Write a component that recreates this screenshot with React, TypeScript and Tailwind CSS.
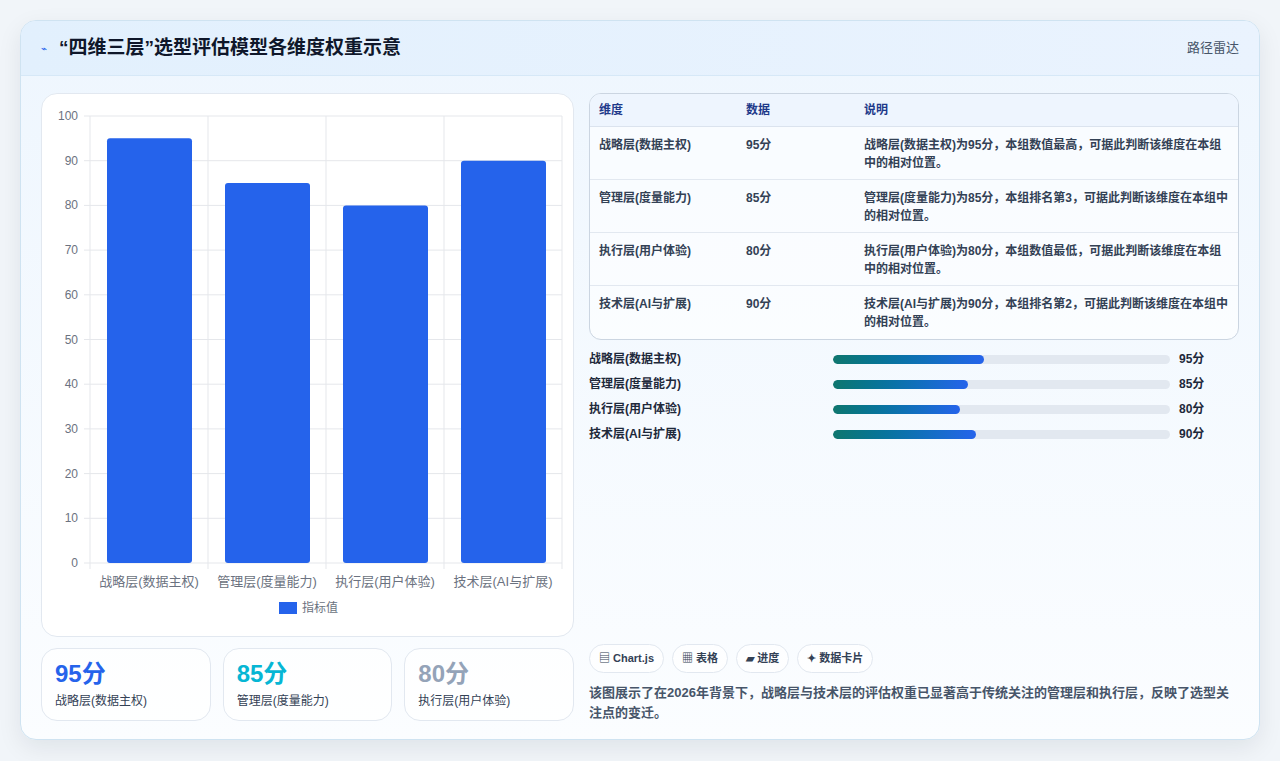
const F = { fontFamily: '"Liberation Sans", "Noto Sans CJK SC", sans-serif' };

const data = [
  { name: "战略层(数据主权)", v: 95, note: "战略层(数据主权)为95分，本组数值最高，可据此判断该维度在本组中的相对位置。" },
  { name: "管理层(度量能力)", v: 85, note: "管理层(度量能力)为85分，本组排名第3，可据此判断该维度在本组中的相对位置。" },
  { name: "执行层(用户体验)", v: 80, note: "执行层(用户体验)为80分，本组数值最低，可据此判断该维度在本组中的相对位置。" },
  { name: "技术层(AI与扩展)", v: 90, note: "技术层(AI与扩展)为90分，本组排名第2，可据此判断该维度在本组中的相对位置。" },
];

function Chart() {
  const L = 48, T = 22, W = 472, H = 447;
  const ticks = [100, 90, 80, 70, 60, 50, 40, 30, 20, 10, 0];
  const cw = W / 4;
  return (
    <svg width="533" height="543" className="block">
      {ticks.map((t) => {
        const y = T + H - (t / 100) * H;
        return (
          <g key={t}>
            <line x1={L - 6} x2={L + W} y1={y} y2={y} stroke="#e5e7eb" />
            <text x={L - 12} y={y + 4} textAnchor="end" fontSize="12" fill="#6b7280" style={F}>{t}</text>
          </g>
        );
      })}
      {[0, 1, 2, 3, 4].map((i) => (
        <line key={i} x1={L + i * cw} x2={L + i * cw} y1={T} y2={T + H + 6} stroke="#e5e7eb" />
      ))}
      {data.map((d, i) => {
        const h = (d.v / 100) * H;
        return (
          <g key={d.name}>
            <rect x={L + i * cw + 17} y={T + H - h} width={85} height={h} rx="3" fill="#2563eb" />
            <text x={L + i * cw + cw / 2} y={T + H + 23} textAnchor="middle" fontSize="13" fill="#6b7280" style={F}>{d.name}</text>
          </g>
        );
      })}
      <rect x={237} y={508} width={18} height={12} fill="#2563eb" />
      <text x={260} y={518} fontSize="12" fill="#6b7280" style={F}>指标值</text>
    </svg>
  );
}

export default function App() {
  const stats = [
    { v: "95分", c: "text-[#2563eb]", l: "战略层(数据主权)" },
    { v: "85分", c: "text-[#06b6d4]", l: "管理层(度量能力)" },
    { v: "80分", c: "text-[#94a3b8]", l: "执行层(用户体验)" },
  ];
  return (
    <div className="h-[761px] w-[1280px] bg-[#f1f5f9] p-5 pb-[21px]" style={F}>
      <div className="flex h-[720px] flex-col overflow-hidden rounded-2xl border border-[#cfe3f1] bg-gradient-to-b from-[#eef6fe] to-[#fbfdff] shadow-[0_8px_24px_rgba(15,23,42,0.08)]">
        <div className="flex h-[55px] shrink-0 items-center justify-between border-b border-[#d6e8f7] bg-gradient-to-r from-[#e2f0fd] to-[#eaf3fe] px-5">
          <div className="flex items-center gap-3">
            <span className="text-[10px] text-[#2563eb]">⌁</span>
            <h1 className="text-[19px] font-bold text-[#0f172a]">“四维三层”选型评估模型各维度权重示意</h1>
          </div>
          <span className="text-[13px] text-[#475569]">路径雷达</span>
        </div>
        <div className="flex flex-1 gap-[15px] px-5 pt-[17px]">
          <div className="flex w-[533px] flex-col gap-[11px]">
            <div className="h-[544px] rounded-2xl border border-[#e2e8f0] bg-white">
              <Chart />
            </div>
            <div className="flex gap-3">
              {stats.map((s) => (
                <div key={s.v} className="flex h-[73px] flex-1 flex-col justify-center rounded-2xl border border-[#e2e8f0] bg-white/70 px-[13px]">
                  <div className={`text-[24px] font-bold leading-7 ${s.c}`}>{s.v}</div>
                  <div className="mt-1 text-[12px] text-[#334155]">{s.l}</div>
                </div>
              ))}
            </div>
          </div>
          <div className="flex flex-1 flex-col">
            <div className="overflow-hidden rounded-xl border border-[#cbd5e1] bg-white/60">
              <div className="flex h-[33px] items-center border-b border-[#dbe3ee] bg-[#eef5fe] text-[12px] font-bold text-[#1e3a8a]">
                <div className="w-[156px] pl-[9px]">维度</div>
                <div className="w-[118px]">数据</div>
                <div className="flex-1">说明</div>
              </div>
              {data.map((d, i) => (
                <div key={d.name} className={`flex h-[53px] pt-[9px] text-[12px] font-bold text-[#334155] ${i < 3 ? "border-b border-[#e2e8f0]" : ""}`}>
                  <div className="w-[156px] pl-[9px]">{d.name}</div>
                  <div className="w-[118px]">{d.v}分</div>
                  <div className="flex-1 pr-2 leading-[18px]">{d.note}</div>
                </div>
              ))}
            </div>
            <div className="mt-[10px] flex flex-col gap-[7px]">
              {data.map((d) => (
                <div key={d.name} className="flex h-[18px] items-center text-[12px] font-bold text-[#1e293b]">
                  <div className="w-[244px]">{d.name}</div>
                  <div className="h-[9px] w-[337px] overflow-hidden rounded-full bg-[#e2e8f0]">
                    <div className="h-full rounded-full bg-gradient-to-r from-[#0f766e] to-[#2563eb]" style={{ width: `${(d.v / 212.5) * 100}%` }} />
                  </div>
                  <div className="ml-[9px]">{d.v}分</div>
                </div>
              ))}
            </div>
            <div className="flex-1" />
            <div className="flex gap-[8px]">
              {["▤ Chart.js", "▦ 表格", "▰ 进度", "✦ 数据卡片"].map((c) => (
                <span key={c} className="flex h-[29px] items-center rounded-full border border-[#e2e8f0] bg-white/70 px-[9px] text-[11px] font-bold text-[#334155]">{c}</span>
              ))}
            </div>
            <p className="mt-[10px] mb-[16px] text-[13px] font-bold leading-5 text-[#475569]">
              该图展示了在2026年背景下，战略层与技术层的评估权重已显著高于传统关注的管理层和执行层，反映了选型关注点的变迁。
            </p>
          </div>
        </div>
      </div>
    </div>
  );
}
